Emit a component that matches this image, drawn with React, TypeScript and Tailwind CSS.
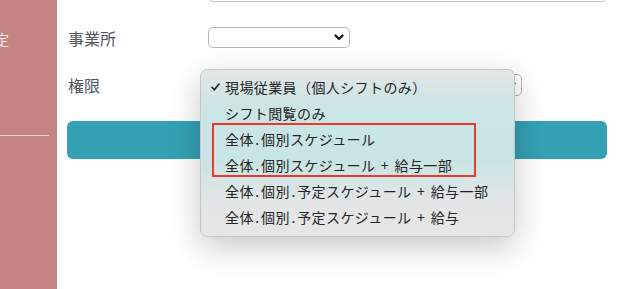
import React from "react";

const jp = { fontFamily: '"Noto Sans CJK JP", "Noto Sans", sans-serif' };

function Chevron() {
  return (
    <svg width="10" height="7" viewBox="0 0 10 7" className="block">
      <path d="M1.5 1.5 L5 5 L8.5 1.5" fill="none" stroke="#111" strokeWidth="2.2" strokeLinecap="round" strokeLinejoin="round" />
    </svg>
  );
}

const items = [
  "現場従業員（個人シフトのみ）",
  "シフト閲覧のみ",
  "全体.個別スケジュール",
  "全体.個別スケジュール + 給与一部",
  "全体.個別.予定スケジュール + 給与一部",
  "全体.個別.予定スケジュール + 給与",
];

function Label({ t }: { t: string }) {
  const parts = t.split(".");
  return (
    <span className="whitespace-pre tracking-[0.4px] [word-spacing:2px]">
      {parts.map((p, i) => (
        <React.Fragment key={i}>
          {i > 0 && <span className="mx-[1.5px]">.</span>}
          {p}
        </React.Fragment>
      ))}
    </span>
  );
}

export default function App() {
  return (
    <div className="relative flex h-[289px] w-[635px] overflow-hidden bg-white" style={jp}>
      <aside className="flex w-[57px] shrink-0 flex-col bg-[#c58383]">
        <div className="ml-[-19px] mt-[29px] whitespace-nowrap text-[14px] leading-[20px] text-[#f7eaea]">設定</div>
        <div className="mt-[86px] h-px w-[49px] bg-[#ebd3d3]" />
      </aside>

      <main className="flex flex-1 flex-col pl-[10px] pr-[28px]">
        <div className="mt-[-20px] ml-[141px] h-[22px] rounded-[5px] border border-[#c4c4c4]" />

        <div className="mt-[25px] flex h-[21px] items-center">
          <div className="w-[141px] pl-[1px] text-[16px] leading-none text-[#4e5660]">事業所</div>
          <div className="flex h-[21px] w-[142px] items-center justify-end rounded-[5px] border border-[#b4b4b4] pr-[5px]">
            <Chevron />
          </div>
        </div>

        <div className="mt-[26px] flex h-[22px] items-center">
          <div className="w-[141px] pl-[1px] text-[16px] leading-none text-[#4e5660]">権限</div>
          <div className="flex h-[22px] w-[314px] items-center justify-end rounded-[5px] border border-[#b4b4b4] pr-[5px]">
            <Chevron />
          </div>
        </div>

        <div className="mt-[25px] h-[38px] rounded-[6px] bg-[#34a1b5]" />
      </main>

      <div
        className="absolute left-[200px] top-[69px] w-[315px] rounded-[7px] border border-[#c4c6c6] pt-[4px] pb-[6px] shadow-[0_10px_32px_rgba(0,0,0,0.22)]"
        style={{
          background:
            "linear-gradient(180deg, #e4e6e6 0%, #d3e5e5 14%, #c9e5e5 30%, #c9e4e4 55%, #dde5e5 72%, #e5e5e5 85%, #e6e6e6 100%)",
        }}
      >
        {items.map((t, i) => (
          <div key={t} className="flex h-[26px] items-center text-[14px] leading-none text-[#242424]">
            <div className="flex w-[24px] justify-end pr-[5px]">
              {i === 0 && (
                <svg width="9" height="8" viewBox="0 0 9 8" className="block">
                  <path d="M1 4.3 L3.4 6.8 L8 1" fill="none" stroke="#222" strokeWidth="1.6" strokeLinecap="round" strokeLinejoin="round" />
                </svg>
              )}
            </div>
            <Label t={t} />
          </div>
        ))}
      </div>

      <div className="pointer-events-none absolute left-[212px] top-[123px] h-[54px] w-[264px] border-2 border-[#e8392c]" />
    </div>
  );
}
